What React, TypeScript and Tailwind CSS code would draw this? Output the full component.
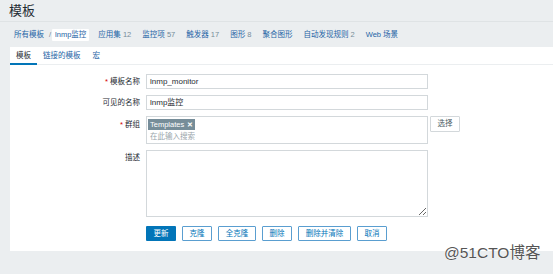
import React from "react";

const F = { fontFamily: '"Liberation Sans", "Noto Sans CJK SC", sans-serif' };

export default function App() {
  const crumbs: [string, string?][] = [
    ["应用集", "12"],
    ["监控项", "57"],
    ["触发器", "17"],
    ["图形", "8"],
    ["聚合图形"],
    ["自动发现规则", "2"],
    ["Web 场景"],
  ];
  const buttons: [string, number][] = [
    ["克隆", 30],
    ["全克隆", 38],
    ["删除", 30],
    ["删除并清除", 53],
    ["取消", 30],
  ];
  return (
    <div
      className="relative w-[553px] h-[274px] overflow-hidden bg-[#ebeef0] text-[#1f2c33] flex flex-col"
      style={F}
    >
      <div className="h-[22px] shrink-0 border-b border-[#dfe3e5] flex items-center pl-[9px]">
        <span className="text-[13px] leading-none text-[#1f2c33] -mt-[1px]">模板</span>
      </div>
      <div className="h-[25px] shrink-0 flex items-center pl-[14px] text-[7.5px] leading-none">
        <span className="text-[#1f65a6]">所有模板</span>
        <span className="text-[#768d99] ml-[5px]">/</span>
        <span className="ml-[1px] bg-white px-[3px] h-[12px] flex items-center text-[#1f65a6] rounded-[1px]">lnmp监控</span>
        {crumbs.map(([a, b], i) => (
          <span key={i} className={(i === 0 ? "ml-[9px]" : "ml-[11px]") + " text-[#1f65a6] whitespace-pre"}>
            {a}
            {b && <span className="text-[#768d99]"> {b}</span>}
          </span>
        ))}
      </div>
      <div className="ml-[10px] h-[204px] shrink-0 bg-white flex flex-col">
        <div className="h-[18px] shrink-0 border-b border-[#ebeef0] flex items-stretch text-[7.5px] leading-none">
          <div className="w-[27px] flex items-center justify-center border-b-2 border-[#0275b8] -mb-[1px] pt-[1px] text-[#1f2c33]">模板</div>
          <div className="ml-[6px] flex items-center text-[#1f65a6]">链接的模板</div>
          <div className="ml-[12px] flex items-center text-[#1f65a6]">宏</div>
        </div>
        <div className="pt-[9px] flex flex-col text-[7.5px] leading-none">
          <div className="flex items-center h-[15px]">
            <div className="w-[130px] text-right pr-0">
              <span className="text-[#d40000] mr-[2px]">*</span>模板名称
            </div>
            <div className="ml-[6px] w-[282px] h-[15px] border border-[#d3d8db] flex items-center pl-[3px] text-[8px]">lnmp_monitor</div>
          </div>
          <div className="flex items-center h-[15px] mt-[6px]">
            <div className="w-[130px] text-right">可见的名称</div>
            <div className="ml-[6px] w-[282px] h-[15px] border border-[#d3d8db] flex items-center pl-[3px] text-[8px]">lnmp监控</div>
          </div>
          <div className="flex items-start mt-[6px]">
            <div className="w-[130px] text-right pt-[5px]">
              <span className="text-[#d40000] mr-[2px]">*</span>群组
            </div>
            <div className="ml-[6px] w-[282px] h-[28px] border border-[#d3d8db] pl-[1px] pt-[2px] flex flex-col items-start">
              <div className="h-[11px] px-[2px] bg-[#768d99] text-white flex items-center gap-[3px] text-[7.5px]">
                <span>Templates</span>
                <span className="font-bold text-[7px]">✕</span>
              </div>
              <div className="mt-[3px] ml-[2px] text-[#9aa5ab] text-[7.5px]">在此输入搜索</div>
            </div>
            <div className="ml-[2px] w-[30px] h-[16px] border border-[#d3d8db] rounded-[1px] flex items-center justify-center text-[#4a5a63] text-[7.5px]">选择</div>
          </div>
          <div className="flex items-start mt-[6px]">
            <div className="w-[130px] text-right pt-[4px]">描述</div>
            <textarea
              className="ml-[6px] w-[282px] h-[67px] border border-[#d3d8db] outline-none block"
              readOnly
            />
          </div>
          <div className="flex items-center mt-[9px] ml-[136px] gap-[6px]">
            <div className="w-[30px] h-[15px] bg-[#0275b8] rounded-[1px] text-white flex items-center justify-center">更新</div>
            {buttons.map(([t, w], i) => (
              <div
                key={i}
                style={{ width: w }}
                className="h-[15px] border border-[#5a9ed0] rounded-[1px] text-[#0275b8] flex items-center justify-center"
              >
                {t}
              </div>
            ))}
          </div>
        </div>
      </div>
      <div
        className="absolute left-[444px] top-[245px] text-[15.5px] leading-none text-[#555] tracking-[0px]"
        style={{ textShadow: "0 0 1px #fff, 0 0 1px #fff" }}
      >
        @51CTO博客
      </div>
    </div>
  );
}
